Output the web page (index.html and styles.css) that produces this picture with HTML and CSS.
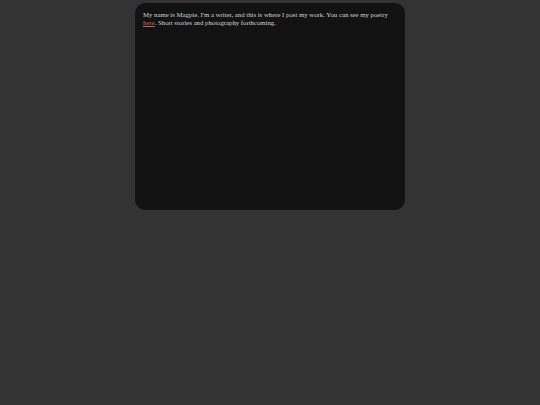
FILE: index.html
```html
<!DOCTYPE html>
<html>
<head>
<meta charset="utf-8">
<link rel="stylesheet" href="styles.css">
</head>
<body>
<div class="box">
<p class="intro">My name is Magpie. I'm a writer, and this is where I post my work. You can see my poetry <a href="#" class="link">here</a>. Short stories and photography forthcoming.</p>
</div>
</body>
</html>
```
FILE: styles.css
```css
html, body {
  margin: 0;
  padding: 0;
  background: #333333;
}
body {
  font-family: "Liberation Serif", "Times New Roman", serif;
}
.box {
  width: 254px;
  height: 191px;
  margin: 3px auto 0;
  padding: 8px;
  background: #121212;
  border-radius: 10px;
}
.intro {
  margin: 0;
  font-size: 6.75px;
  line-height: 8px;
  color: #d4d4d4;
}
.link {
  color: #c86464;
}
```
